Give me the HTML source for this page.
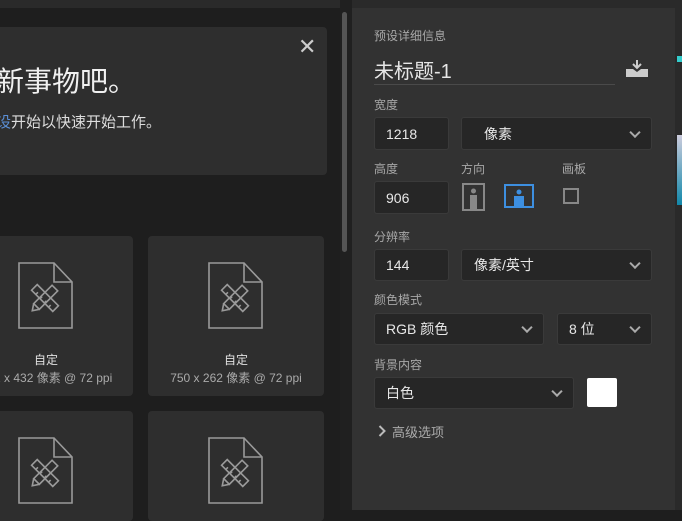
<!DOCTYPE html>
<html><head><meta charset="utf-8"><style>
*{margin:0;padding:0;box-sizing:border-box}
body{width:682px;height:510px;overflow:hidden;background:#1e1e1e;font-family:"Liberation Sans","Noto Sans CJK SC",sans-serif;position:relative;color:#ddd}
.a{position:absolute}
.top{left:0;top:0;width:682px;height:8px;background:#2a2a2a}
.hdr{left:-10px;top:27px;width:337px;height:148px;background:#2e2e2e;border-radius:4px}
.card{background:#2e2e2e;border-radius:4px}
.lbl{font-size:12px;color:#a8a8a8}
.inp{background:#262626;border:1px solid #3a3a3a;border-radius:3px;font-size:14px;color:#e8e8e8;padding-left:11px;display:flex;align-items:center}
.chev{position:absolute;right:12px;top:50%;width:8px;height:8px;border-right:2px solid #aaa;border-bottom:2px solid #aaa;transform:translateY(-70%) rotate(45deg)}
.cap{font-size:12px;text-align:center;width:100%}
</style></head><body>
<div class="a top"></div>
<div class="a hdr"></div>
<div class="a" style="left:298px;top:36px;font-size:22px;color:#ccc;line-height:22px">✕</div>
<div class="a" style="left:-4px;top:64px;font-size:28px;color:#f0f0f0;line-height:36px">新事物吧。</div>
<div class="a" style="left:-4px;top:113px;font-size:15px;color:#ddd;line-height:20px"><span style="color:#5b8fd6">设</span>开始以快速开始工作。</div>
<div class="a" style="left:340px;top:0;width:12px;height:510px;background:#202020"></div>
<div class="a" style="left:342px;top:12px;width:5px;height:240px;background:#555;border-radius:3px"></div>

<svg width="0" height="0" style="position:absolute"><defs><g id="doc" fill="none" stroke="#9a9a9a" stroke-width="1.6"><path d="M1 1H36L54 20V66H1Z"/><path d="M36 1V20H54"/><g transform="translate(27,36) rotate(45)"><rect x="-4" y="-14" width="8" height="26"/><path d="M-4 12L0 18L4 12"/></g><g transform="translate(27,36) rotate(-45)"><rect x="-4" y="-15" width="8" height="30"/><path d="M-4 -9h3M-4 -3h3M-4 3h3M-4 9h3"/></g></g></defs></svg>

<div class="a card" style="left:-10px;top:236px;width:143px;height:160px"></div>
<div class="a card" style="left:148px;top:236px;width:176px;height:160px"></div>
<div class="a card" style="left:-10px;top:411px;width:143px;height:110px"></div>
<div class="a card" style="left:148px;top:411px;width:176px;height:110px"></div>
<svg class="a" style="left:18px;top:262px" width="56" height="68"><use href="#doc"/></svg>
<svg class="a" style="left:208px;top:262px" width="56" height="68"><use href="#doc"/></svg>
<svg class="a" style="left:18px;top:437px" width="56" height="68"><use href="#doc"/></svg>
<svg class="a" style="left:208px;top:437px" width="56" height="68"><use href="#doc"/></svg>
<div class="a" style="left:34px;top:351px;font-size:12px;color:#e0e0e0">自定</div>
<div class="a" style="left:-6px;top:369px;font-size:12px;color:#aaa;white-space:nowrap">2 x 432 像素 @ 72 ppi</div>
<div class="a cap" style="left:148px;top:351px;width:176px;color:#e0e0e0">自定</div>
<div class="a cap" style="left:148px;top:369px;width:176px;color:#aaa">750 x 262 像素 @ 72 ppi</div>

<div class="a" style="left:352px;top:8px;width:323px;height:502px;background:#323232"></div>
<div class="a" style="left:675px;top:8px;width:7px;height:502px;background:#2a2a2a"></div>
<div class="a" style="left:677px;top:56px;width:5px;height:6px;background:#3cc"></div>
<div class="a" style="left:677px;top:135px;width:5px;height:70px;background:linear-gradient(#ccd,#18a)"></div>

<div class="a lbl" style="left:374px;top:27px">预设详细信息</div>
<div class="a" style="left:374px;top:55px;font-size:20px;color:#e6e6e6">未标题-1</div>
<div class="a" style="left:374px;top:84px;width:241px;height:1px;background:#4a4a4a"></div>
<svg class="a" style="left:625px;top:60px" width="24" height="17"><path d="M12 0v7M8 4l4 4 4-4" stroke="#ccc" stroke-width="2" fill="none"/><path d="M1 9h7l4 3 4-3h7v8H1z" fill="#ccc"/></svg>

<div class="a lbl" style="left:374px;top:96px">宽度</div>
<div class="a inp" style="left:374px;top:117px;width:75px;height:33px">1218</div>
<div class="a inp" style="left:461px;top:117px;width:191px;height:33px;padding-left:22px">像素<i class="chev"></i></div>

<div class="a lbl" style="left:374px;top:160px">高度</div>
<div class="a lbl" style="left:461px;top:160px">方向</div>
<div class="a lbl" style="left:562px;top:160px">画板</div>
<div class="a inp" style="left:374px;top:181px;width:75px;height:33px">906</div>
<svg class="a" style="left:462px;top:183px" width="23" height="28"><rect x="1" y="1" width="21" height="26" fill="none" stroke="#888" stroke-width="2"/><circle cx="11.5" cy="8" r="2.5" fill="#888"/><rect x="8" y="12" width="7" height="15" fill="#888"/></svg>
<svg class="a" style="left:504px;top:184px" width="30" height="24"><rect x="1" y="1" width="28" height="22" fill="none" stroke="#3d8fe0" stroke-width="2"/><circle cx="15" cy="8" r="2.5" fill="#3d8fe0"/><rect x="10" y="12" width="10" height="11" fill="#3d8fe0"/></svg>
<div class="a" style="left:563px;top:188px;width:16px;height:16px;border:2px solid #888"></div>

<div class="a lbl" style="left:374px;top:228px">分辨率</div>
<div class="a inp" style="left:374px;top:249px;width:75px;height:32px">144</div>
<div class="a inp" style="left:461px;top:249px;width:191px;height:32px;padding-left:12px">像素/英寸<i class="chev"></i></div>

<div class="a lbl" style="left:374px;top:291px">颜色模式</div>
<div class="a inp" style="left:374px;top:313px;width:170px;height:32px">RGB 颜色<i class="chev"></i></div>
<div class="a inp" style="left:557px;top:313px;width:95px;height:32px">8 位<i class="chev"></i></div>

<div class="a lbl" style="left:374px;top:356px">背景内容</div>
<div class="a inp" style="left:374px;top:377px;width:200px;height:32px">白色<i class="chev"></i></div>
<div class="a" style="left:587px;top:378px;width:30px;height:29px;background:#fff;border-radius:2px"></div>

<svg class="a" style="left:378px;top:425px" width="8" height="12"><path d="M1.5 1l5 5-5 5" stroke="#bbb" stroke-width="2" fill="none"/></svg>
<div class="a" style="left:392px;top:422px;font-size:13px;color:#aaa">高级选项</div>
</body></html>
